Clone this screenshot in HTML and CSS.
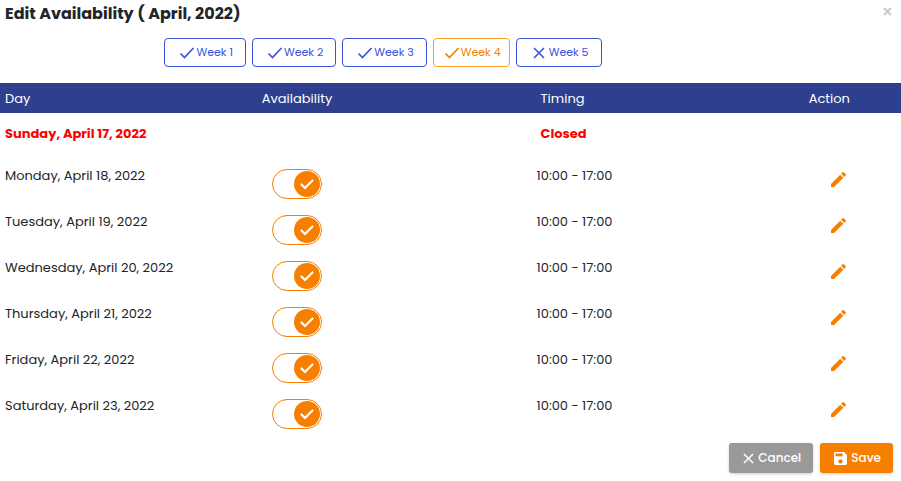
FILE: index.html
```
<!DOCTYPE html>
<html lang="en">
<head>
    <meta charset="UTF-8">
    <meta name="viewport" content="width=device-width, initial-scale=1.0">
    <title>Edit Availability</title>
    <link rel="stylesheet" href="styles.css">
</head>
<body>
    <svg class="symbols" aria-hidden="true">
        <symbol id="check" viewBox="0 0 16 14"><path d="M1.5 7.5l4 4L14.5 2" fill="none" stroke="currentColor" stroke-width="1.7"/></symbol>
        <symbol id="cross" viewBox="0 0 12 12"><path d="M1 1l10 10M11 1L1 11" fill="none" stroke="currentColor" stroke-width="1.6"/></symbol>
        <symbol id="tick" viewBox="0 0 16 14"><path d="M2.500 7.500l3.500 3.500L13.500 3.500" fill="none" stroke="currentColor" stroke-width="2.2" stroke-linecap="round"/></symbol>
        <symbol id="pencil" viewBox="3 3 18 18"><path d="M3 17.25V21h3.75L17.81 9.94l-3.75-3.75L3 17.25zM20.71 7.04a1 1 0 0 0 0-1.41l-2.34-2.34a1 1 0 0 0-1.41 0l-1.83 1.83 3.75 3.75 1.83-1.83z" fill="currentColor"/></symbol>
        <symbol id="disk" viewBox="3 3 18 18"><path d="M17 3H5a2 2 0 0 0-2 2v14a2 2 0 0 0 2 2h14a2 2 0 0 0 2-2V7l-4-4zm-5 16a3 3 0 1 1 0-6 3 3 0 0 1 0 6zm3-10H5V5h10v4z" fill="currentColor"/></symbol>
    </svg>

    <header class="header">
        <h1>Edit Availability ( April, 2022)</h1>
        <button class="close" type="button" aria-label="Close"><svg width="9" height="9" viewBox="0 0 9 9"><path d="M1 1l7 7M8 1L1 8" fill="none" stroke="currentColor" stroke-width="2.4"/></svg></button>
    </header>

    <div class="weeks">
        <button class="week" type="button"><svg width="16" height="14"><use href="#check"/></svg>Week 1</button>
        <button class="week" type="button"><svg width="16" height="14"><use href="#check"/></svg>Week 2</button>
        <button class="week" type="button"><svg width="16" height="14"><use href="#check"/></svg>Week 3</button>
        <button class="week active" type="button"><svg width="16" height="14"><use href="#check"/></svg>Week 4</button>
        <button class="week closed-week" type="button"><svg width="12" height="12"><use href="#cross"/></svg>Week 5</button>
    </div>

    <table class="days">
        <thead>
            <tr>
                <th class="day">Day</th>
                <th class="availability">Availability</th>
                <th class="timing">Timing</th>
                <th class="action">Action</th>
            </tr>
        </thead>
        <tbody>
            <tr class="closed">
                <td>Sunday, April 17, 2022</td>
                <td></td>
                <td class="timing">Closed</td>
                <td></td>
            </tr>
            <tr>
                <td>Monday, April 18, 2022</td>
                <td><label class="switch"><input type="checkbox" aria-label="Monday available" checked><span class="knob"><svg width="16" height="14"><use href="#tick"/></svg></span></label></td>
                <td>10:00 - 17:00</td>
                <td><button class="edit" type="button" aria-label="Edit Monday"><svg width="15" height="15"><use href="#pencil"/></svg></button></td>
            </tr>
            <tr>
                <td>Tuesday, April 19, 2022</td>
                <td><label class="switch"><input type="checkbox" aria-label="Tuesday available" checked><span class="knob"><svg width="16" height="14"><use href="#tick"/></svg></span></label></td>
                <td>10:00 - 17:00</td>
                <td><button class="edit" type="button" aria-label="Edit Tuesday"><svg width="15" height="15"><use href="#pencil"/></svg></button></td>
            </tr>
            <tr>
                <td>Wednesday, April 20, 2022</td>
                <td><label class="switch"><input type="checkbox" aria-label="Wednesday available" checked><span class="knob"><svg width="16" height="14"><use href="#tick"/></svg></span></label></td>
                <td>10:00 - 17:00</td>
                <td><button class="edit" type="button" aria-label="Edit Wednesday"><svg width="15" height="15"><use href="#pencil"/></svg></button></td>
            </tr>
            <tr>
                <td>Thursday, April 21, 2022</td>
                <td><label class="switch"><input type="checkbox" aria-label="Thursday available" checked><span class="knob"><svg width="16" height="14"><use href="#tick"/></svg></span></label></td>
                <td>10:00 - 17:00</td>
                <td><button class="edit" type="button" aria-label="Edit Thursday"><svg width="15" height="15"><use href="#pencil"/></svg></button></td>
            </tr>
            <tr>
                <td>Friday, April 22, 2022</td>
                <td><label class="switch"><input type="checkbox" aria-label="Friday available" checked><span class="knob"><svg width="16" height="14"><use href="#tick"/></svg></span></label></td>
                <td>10:00 - 17:00</td>
                <td><button class="edit" type="button" aria-label="Edit Friday"><svg width="15" height="15"><use href="#pencil"/></svg></button></td>
            </tr>
            <tr>
                <td>Saturday, April 23, 2022</td>
                <td><label class="switch"><input type="checkbox" aria-label="Saturday available" checked><span class="knob"><svg width="16" height="14"><use href="#tick"/></svg></span></label></td>
                <td>10:00 - 17:00</td>
                <td><button class="edit" type="button" aria-label="Edit Saturday"><svg width="15" height="15"><use href="#pencil"/></svg></button></td>
            </tr>
        </tbody>
    </table>

    <footer class="footer">
        <button class="btn cancel" type="button"><svg width="11" height="11"><use href="#cross"/></svg>Cancel</button>
        <button class="btn save" type="button"><svg width="13" height="13"><use href="#disk"/></svg>Save</button>
    </footer>
</body>
</html>
```
FILE: styles.css
```
* {
    box-sizing: border-box;
}
body {
    margin: 0;
    background: #ffffff;
    color: #212529;
    font-family: 'Poppins', 'Inter', sans-serif;
    font-size: 13px;
    line-height: 20px;
}
button {
    font-family: inherit;
    cursor: pointer;
}
svg {
    display: block;
    flex: none;
}
.symbols {
    position: absolute;
    width: 0;
    height: 0;
}
.header {
    display: flex;
    justify-content: space-between;
    align-items: flex-start;
    height: 38px;
    padding: 0 9px 0 5px;
}
h1 {
    margin: 0;
    font-size: 16px;
    font-weight: 700;
    line-height: 28px;
}
.close {
    margin-top: 7px;
    padding: 0;
    border: none;
    background: none;
    color: #cccccc;
}
.weeks {
    display: flex;
    justify-content: center;
    gap: 6px;
    padding-right: 135px;
    margin-bottom: 16px;
}
.week {
    display: flex;
    align-items: center;
    gap: 1px;
    height: 29px;
    padding: 0 12px 0 14px;
    border: 1px solid #3b55d9;
    border-radius: 4px;
    background: #ffffff;
    color: #3b55d9;
    font-size: 11px;
}
.week.active {
    padding: 0 8px 0 10px;
    border-color: #fba026;
    color: #f77f00;
}
.week.closed-week {
    gap: 4px;
    padding-left: 16px;
}
.days {
    width: 100%;
    table-layout: fixed;
    border-collapse: collapse;
}
.day {
    width: 28.5%;
}
.availability {
    width: 30.5%;
}
.timing {
    width: 30.2%;
}
th {
    height: 30px;
    padding: 2px 0 0 5px;
    background: #2e3f8f;
    color: #ffffff;
    font-size: 13px;
    font-weight: 400;
    text-align: left;
}
td {
    height: 46px;
    padding: 12px 0 0 5px;
    vertical-align: top;
}
th.timing, td.timing {
    padding-left: 9px;
}
.closed td {
    height: 41px;
    padding-top: 11px;
    color: #ff0000;
    font-weight: 700;
}
.switch {
    display: flex;
    justify-content: flex-end;
    align-items: center;
    position: relative;
    width: 50px;
    height: 30px;
    margin: 3px 0 0 10px;
    padding-right: 1px;
    border: 1px solid #f77f00;
    border-radius: 15px;
    cursor: pointer;
}
.switch input {
    position: absolute;
    inset: 0;
    margin: 0;
    opacity: 0;
}
.switch input:not(:checked) + .knob {
    margin-right: 20px;
    background: #999999;
}
.knob {
    display: flex;
    align-items: center;
    justify-content: center;
    width: 26px;
    height: 26px;
    border-radius: 50%;
    background: #f77f00;
    color: #ffffff;
}
.edit {
    display: block;
    margin: 6px 0 0 22px;
    padding: 0;
    border: none;
    background: none;
    color: #f77f00;
}
.footer {
    display: flex;
    justify-content: flex-end;
    gap: 7px;
    padding: 13px 8px 8px;
}
.btn {
    display: flex;
    align-items: center;
    gap: 4px;
    height: 30px;
    padding: 0 12px 0 14px;
    border: none;
    border-radius: 3px;
    box-shadow: 0 1px 3px rgba(0, 0, 0, 0.2);
    color: #ffffff;
    font-size: 12px;
    font-weight: 500;
}
.cancel {
    background: #999999;
}
.save {
    background: #f77f00;
}
```
